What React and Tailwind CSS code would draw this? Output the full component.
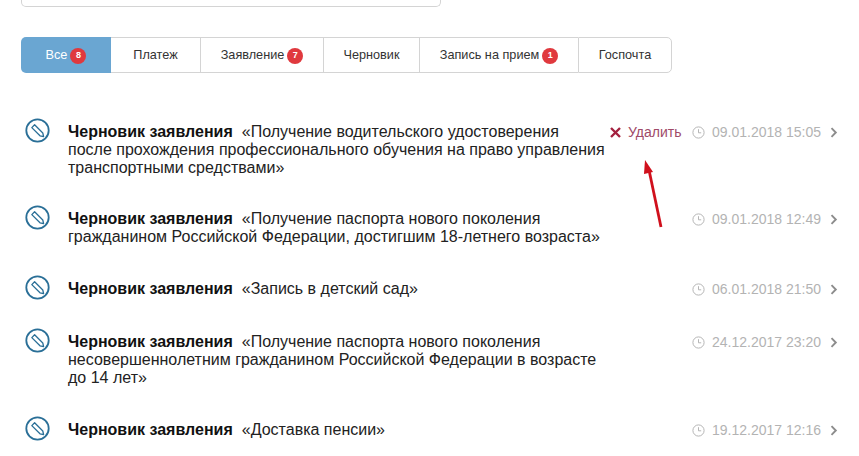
import React from "react";

const rows = [
  { title: ["«Получение водительского удостоверения", "после прохождения профессионального обучения на право управления", "транспортными средствами»"], date: "09.01.2018 15:05", del: true, h: "h-[87px]" },
  { title: ["«Получение паспорта нового поколения", "гражданином Российской Федерации, достигшим 18-летнего возраста»"], date: "09.01.2018 12:49", h: "h-[70px]" },
  { title: ["«Запись в детский сад»"], date: "06.01.2018 21:50", h: "h-[53px]" },
  { title: ["«Получение паспорта нового поколения", "несовершеннолетним гражданином Российской Федерации в возрасте", "до 14 лет»"], date: "24.12.2017 23:20", h: "h-[88px]" },
  { title: ["«Доставка пенсии»"], date: "19.12.2017 12:16", h: "h-[40px]" },
];

function DraftIcon() {
  return (
    <svg width="25" height="25" viewBox="0 0 25 25" fill="none" className="-mt-[5px] shrink-0">
      <circle cx="12.5" cy="12.5" r="11.2" stroke="#2a6f97" strokeWidth="1.8" />
      <path d="M6.8 9.6 L9.6 6.8 L17.8 15 L18.6 18.6 L15 17.8 Z" stroke="#2a6f97" strokeWidth="1.3" strokeLinejoin="round" />
    </svg>
  );
}

function Clock() {
  return (
    <svg width="13" height="13" viewBox="0 0 13 13" fill="none" className="shrink-0">
      <circle cx="6.5" cy="6.5" r="5.6" stroke="#b5b5b5" strokeWidth="1" />
      <path d="M6.5 3.2 V6.8 H9.2" stroke="#b5b5b5" strokeWidth="1" />
    </svg>
  );
}

function Chevron() {
  return (
    <svg width="8" height="11" viewBox="0 0 8 11" fill="none" className="shrink-0">
      <path d="M1.5 1.2 L5.8 5.5 L1.5 9.8" stroke="#8c8c8c" strokeWidth="1.9" />
    </svg>
  );
}

function Badge({ n }) {
  return (
    <span className="ml-[3px] flex h-4 w-4 items-center justify-center rounded-full bg-[#e0393e] text-[9px] font-bold text-white">{n}</span>
  );
}

function Tab({ w, active, children, last }) {
  return (
    <div className={`flex items-center justify-center pt-px text-[12.7px] ${w} ${active ? "rounded-l-[5px] bg-[#6aa6d2] text-white" : "border-y border-l border-[#d4d4d4] text-[#333]"} ${last ? "rounded-r-[5px] border-r" : ""}`}>
      {children}
    </div>
  );
}

export default function App() {
  return (
    <div className="relative h-[456px] w-[859px] overflow-hidden bg-white font-['Liberation_Sans',Arial,sans-serif]">
      <div className="ml-[21px] h-[7px] w-[420px] rounded-b-[5px] border-x border-b border-[#d4d4d4]" />
      <div className="ml-[21px] mt-[30px] flex h-[36px] w-[651px]">
        <Tab w="w-[90px]" active>
          Все
          <Badge n="8" />
        </Tab>
        <div className="flex w-[89px] items-center justify-center border-y border-[#d4d4d4] pt-px text-[12.7px] text-[#333]">Платеж</div>
        <Tab w="w-[123px]">Заявление<Badge n="7" /></Tab>
        <Tab w="w-[96px]">Черновик</Tab>
        <Tab w="w-[159px]">Запись на прием<Badge n="1" /></Tab>
        <Tab w="w-[94px]" last>Госпочта</Tab>
      </div>

      <div className="mt-[50px] flex flex-col">
        {rows.map((r, i) => (
          <div key={i} className={`flex pl-[25px] ${r.h}`}>
            <div className="w-[43px]"><DraftIcon /></div>
            <div className="w-[542px] text-base leading-[18px] text-[#222]">
              {r.title.map((line, j) => (
                <div key={j} className="whitespace-nowrap">
                  {j === 0 && <b className="mr-[9px] font-bold text-[#111]">Черновик заявления</b>}
                  {line}
                </div>
              ))}
            </div>
            <div className="flex h-[18px] items-center">
              <div className="flex w-[82px] items-center">
                {r.del && (
                  <>
                    <svg width="11" height="11" viewBox="0 0 11 11" className="shrink-0">
                      <path d="M1 1 L10 10 M10 1 L1 10" stroke="#a3213f" strokeWidth="2.4" />
                    </svg>
                    <span className="ml-[7px] text-sm text-[#a04a68]">Удалить</span>
                  </>
                )}
              </div>
              <Clock />
              <span className="ml-[7px] w-[118px] text-sm whitespace-nowrap text-[#b3b3b3]">{r.date}</span>
              <Chevron />
            </div>
          </div>
        ))}
      </div>

      <svg className="absolute left-[640px] top-[155px]" width="26" height="75" viewBox="0 0 26 75" fill="none">
        <path d="M21 72 L9 15" stroke="#d0101c" strokeWidth="2.8" />
        <path d="M5 5 L4 19 L13 17 Z" fill="#d0101c" />
      </svg>
    </div>
  );
}
